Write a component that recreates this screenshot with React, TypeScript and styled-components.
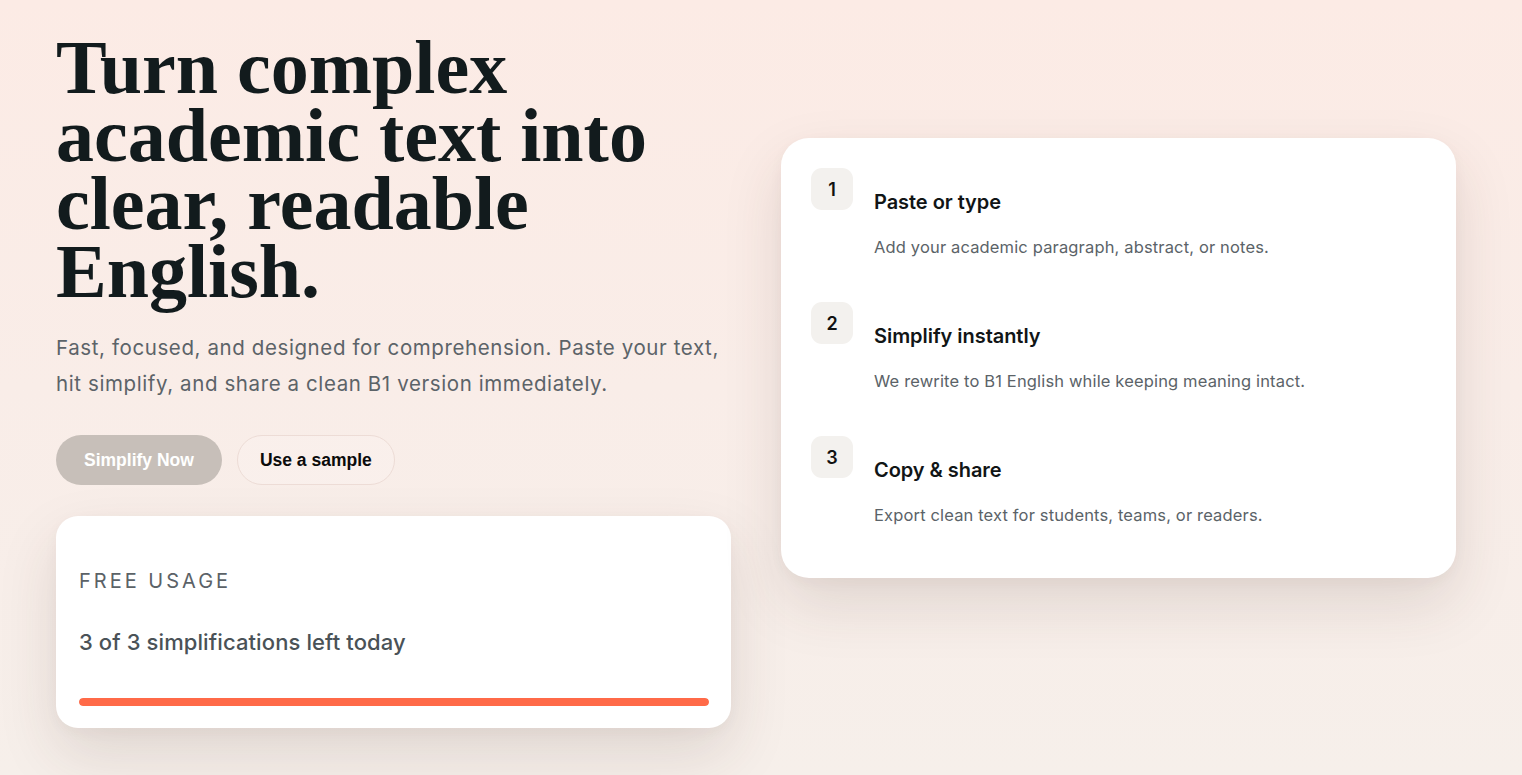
import React from "react";
import styled, { createGlobalStyle } from "styled-components";

const Global = createGlobalStyle`
  html, body { margin: 0; padding: 0; }
  body {
    background: linear-gradient(180deg, #fcebe5 0%, #f9ede8 50%, #f6efea 100%);
    min-height: 775px;
    font-family: "Inter", "Noto Sans", sans-serif;
  }
  * { box-sizing: border-box; }
`;

const Page = styled.main`
  min-height: 775px;
  padding: 33px 0 0 56px;
  display: grid;
  grid-template-columns: 675px 675px;
  column-gap: 50px;
  align-items: start;
`;

const Left = styled.section`
  display: flex;
  flex-direction: column;
`;

const Heading = styled.h1`
  margin: 0;
  font-family: "Liberation Serif", "Times New Roman", serif;
  font-weight: 700;
  font-size: 76px;
  line-height: 68px;
  color: #121b1d;
  letter-spacing: 0px;
`;

const Lead = styled.p`
  margin: 25px 0 0;
  font-size: 20.5px;
  line-height: 36px;
  color: #5c6368;
  letter-spacing: 0.6px;
`;

const Actions = styled.div`
  display: flex;
  gap: 15px;
  margin-top: 33px;
`;

const Button = styled.button<{ $primary?: boolean }>`
  height: 50px;
  border-radius: 25px;
  font-family: "Liberation Sans", Arial, sans-serif;
  font-weight: 700;
  font-size: 17.5px;
  cursor: pointer;
  padding: ${(p) => (p.$primary ? "0 28px" : "0 22px")};
  background: ${(p) => (p.$primary ? "#c7bfb9" : "rgba(255,255,255,0.15)")};
  color: ${(p) => (p.$primary ? "#ffffff" : "#0b0b0b")};
  border: ${(p) => (p.$primary ? "none" : "1px solid #eddcd6")};
`;

const Card = styled.div<{ $radius: number }>`
  background: #ffffff;
  border-radius: ${(p) => p.$radius}px;
  box-shadow: 0 26px 60px rgba(70, 50, 40, 0.13), 0 4px 14px rgba(70, 50, 40, 0.04);
`;

const UsageCard = styled(Card)`
  margin-top: 31px;
  padding: 51px 22px 22px 23px;
  display: flex;
  flex-direction: column;
`;

const UsageLabel = styled.div`
  font-size: 20px;
  line-height: 28px;
  letter-spacing: 3px;
  color: #5b6267;
  font-weight: 400;
`;

const UsageText = styled.div`
  margin-top: 32px;
  font-size: 22px;
  line-height: 30px;
  font-weight: 500;
  color: #4a5257;
  letter-spacing: 0.1px;
`;

const Track = styled.div`
  margin-top: 41px;
  height: 8px;
  border-radius: 4px;
  background: #f1ebe7;
  overflow: hidden;
`;

const Fill = styled.div`
  height: 100%;
  border-radius: 4px;
  background: #ff6a48;
`;

const StepsCard = styled(Card)`
  margin-top: 105px;
  padding: 30px 30px 32px 30px;
  display: flex;
  flex-direction: column;
  gap: 24px;
`;

const Step = styled.div`
  display: grid;
  grid-template-columns: 42px 1fr;
  column-gap: 21px;
`;

const Badge = styled.div`
  width: 42px;
  height: 42px;
  border-radius: 11px;
  background: #f3f1ee;
  display: flex;
  align-items: center;
  justify-content: center;
  font-size: 18px;
  font-weight: 600;
  color: #111;
`;

const StepBody = styled.div`
  padding-top: 22px;
  padding-bottom: 18px;
`;

const StepTitle = styled.h3`
  margin: 0;
  font-size: 20px;
  line-height: 24px;
  font-weight: 600;
  color: #111516;
  letter-spacing: -0.05px;
`;

const StepText = styled.p`
  margin: 20px 0 0;
  font-size: 16.5px;
  line-height: 26px;
  color: #5b6368;
  letter-spacing: 0.15px;
`;

const steps = [
  { n: 1, title: "Paste or type", text: "Add your academic paragraph, abstract, or notes." },
  { n: 2, title: "Simplify instantly", text: "We rewrite to B1 English while keeping meaning intact." },
  { n: 3, title: "Copy & share", text: "Export clean text for students, teams, or readers." },
];

export default function App() {
  const used = 3;
  const total = 3;
  return (
    <>
      <Global />
      <Page>
        <Left>
          <Heading>
            Turn complex
            <br />
            academic text into
            <br />
            clear, readable
            <br />
            English.
          </Heading>
          <Lead>
            Fast, focused, and designed for comprehension. Paste your text,
            <br />
            hit simplify, and share a clean B1 version immediately.
          </Lead>
          <Actions>
            <Button $primary>Simplify Now</Button>
            <Button>Use a sample</Button>
          </Actions>
          <UsageCard $radius={22}>
            <UsageLabel>FREE USAGE</UsageLabel>
            <UsageText>
              {used} of {total} simplifications left today
            </UsageText>
            <Track>
              <Fill style={{ width: `${(used / total) * 100}%` }} />
            </Track>
          </UsageCard>
        </Left>
        <StepsCard $radius={28}>
          {steps.map((s) => (
            <Step key={s.n}>
              <Badge>{s.n}</Badge>
              <StepBody>
                <StepTitle>{s.title}</StepTitle>
                <StepText>{s.text}</StepText>
              </StepBody>
            </Step>
          ))}
        </StepsCard>
      </Page>
    </>
  );
}
